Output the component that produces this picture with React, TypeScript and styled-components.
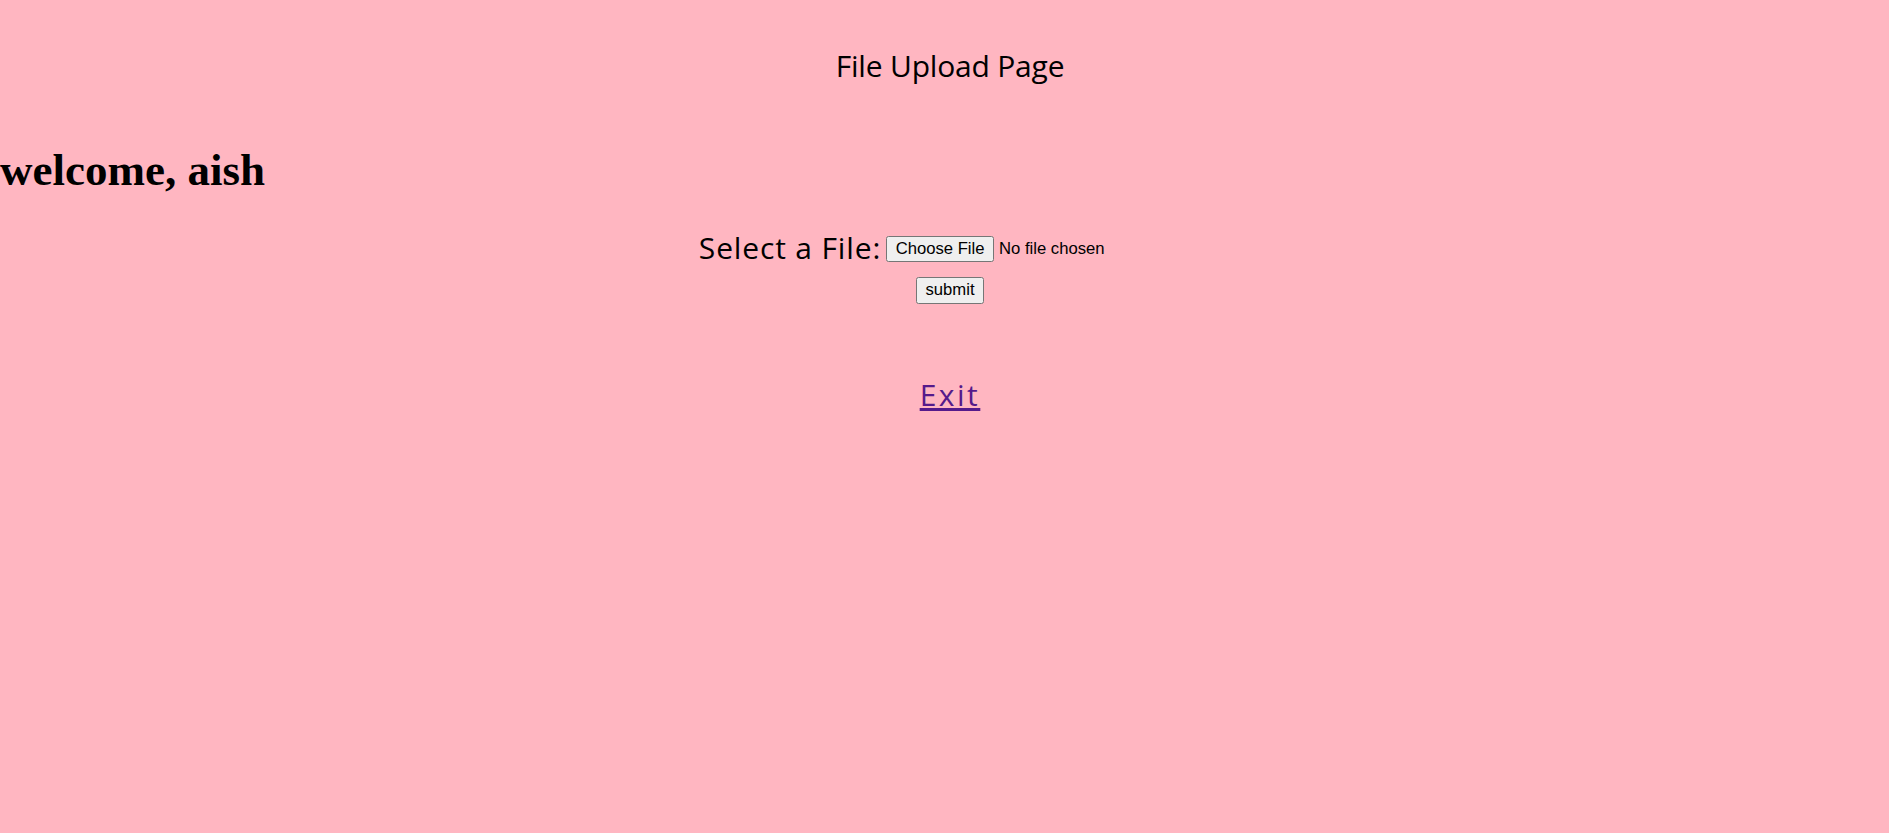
import React from 'react';
import styled, { createGlobalStyle } from 'styled-components';

const GlobalStyle = createGlobalStyle`
  html, body {
    margin: 0;
    padding: 0;
    background: #ffb6c1;
  }
`

const Page = styled.div`
  min-height: 100vh;
  background: #ffb6c1;
  color: #000;
  font-family: "Comic Sans MS", "Open Sans", sans-serif;
  overflow: hidden;
`

const Title = styled.h2`
  margin: 46px 0 0 0;
  padding-left: 11px;
  text-align: center;
  font-size: 30px;
  line-height: 40px;
  font-weight: 400;
  letter-spacing: -0.2px;
`

// welcome 見出しだけブラウザ既定の Times のまま
const Welcome = styled.h1`
  margin: 59px 0 0 0;
  font-family: "Liberation Serif", serif;
  font-weight: 700;
  font-size: 45px;
  line-height: 50px;
`

const UploadForm = styled.form`
  margin-top: 33px;
  padding-left: 11px;
  display: flex;
  flex-direction: column;
  align-items: center;
  gap: 9px;
`

const FileRow = styled.div`
  font-size: 30px;
  line-height: 40px;
  height: 40px;
`

const FieldLabel = styled.label`
  letter-spacing: 0.85px;
`

const FileInput = styled.input`
  zoom: 1.25;
  font-family: Arial, "Liberation Sans", sans-serif;
  font-size: 13.333px;
  margin-left: 4px;
  vertical-align: 4px;
`

const SubmitButton = styled.button`
  zoom: 1.25;
  font-family: Arial, "Liberation Sans", sans-serif;
  font-size: 13.333px;
`

const ExitWrap = styled.div`
  margin-top: 71px;
  padding-left: 11px;
  text-align: center;
  font-size: 30px;
  line-height: 40px;
`

const ExitLink = styled.a`
  color: #551a8b;
  text-decoration: underline;
  letter-spacing: 2.5px;
`

function App() {
  return (
    <Page>
      <GlobalStyle />
      <Title>File Upload Page</Title>
      <Welcome>welcome, aish</Welcome>
      <UploadForm onSubmit={(e) => e.preventDefault()}>
        <FileRow>
          <FieldLabel htmlFor="file">Select a File:</FieldLabel>
          <FileInput id="file" type="file" />
        </FileRow>
        <SubmitButton type="submit">submit</SubmitButton>
      </UploadForm>
      <ExitWrap>
        <ExitLink href="#">Exit</ExitLink>
      </ExitWrap>
    </Page>
  );
}

export default App;
